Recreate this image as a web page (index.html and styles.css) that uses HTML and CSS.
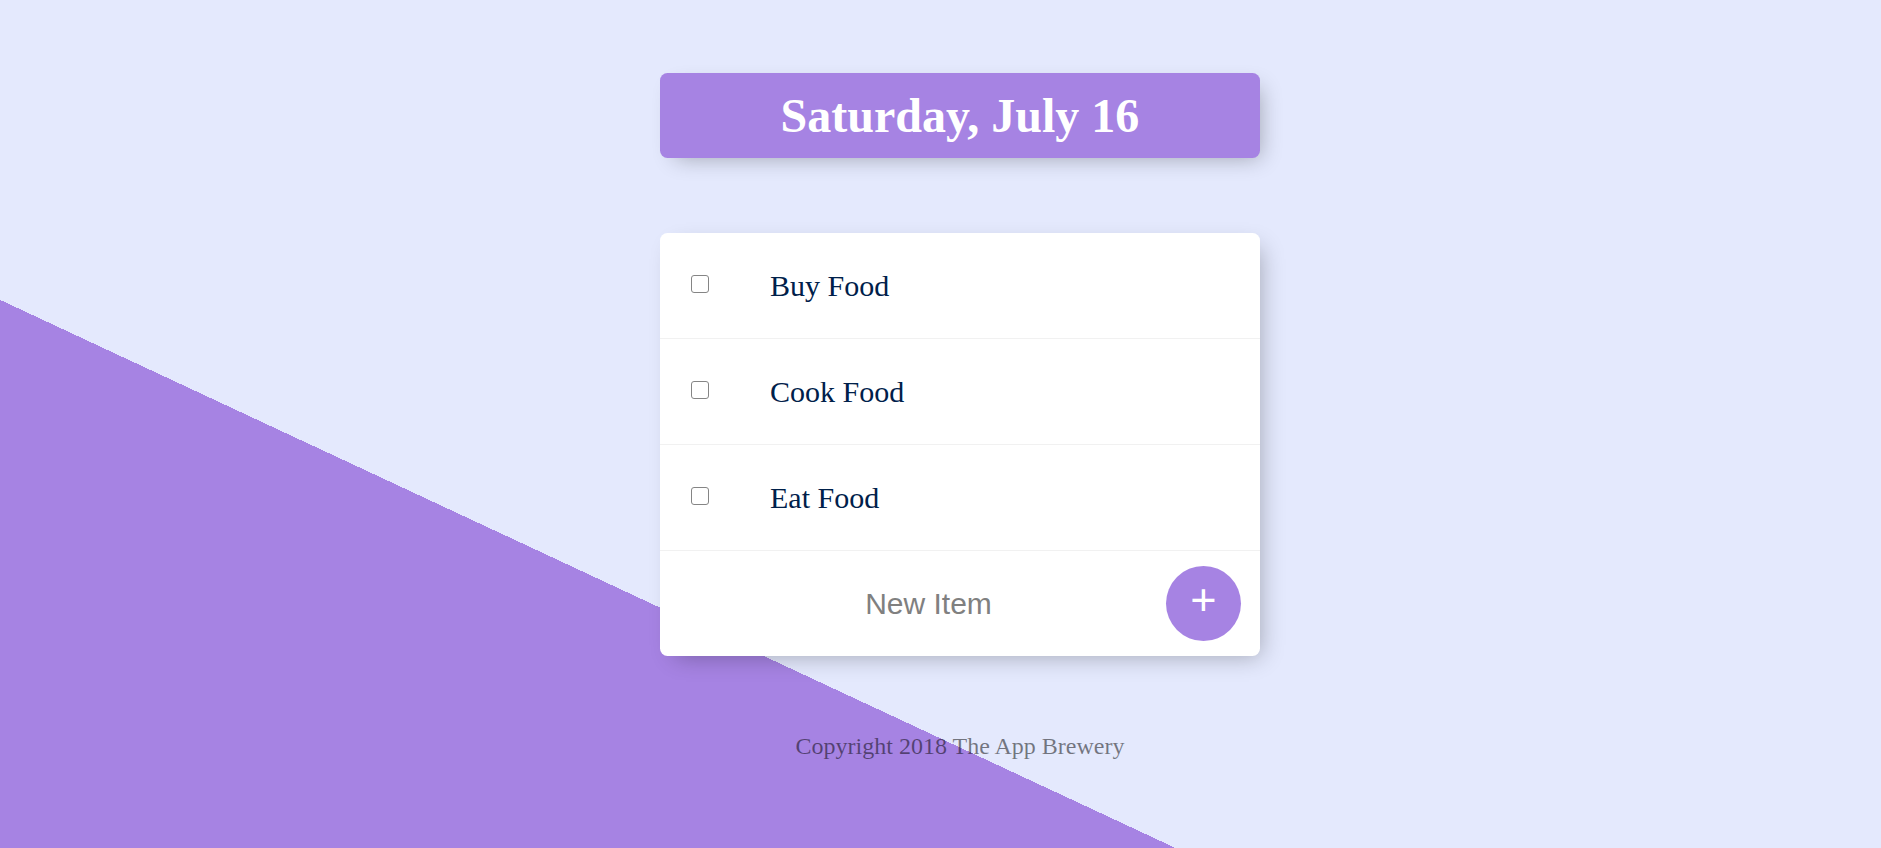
FILE: index.html
```html
<!DOCTYPE html>
<html lang="en">
<head>
<meta charset="utf-8">
<title>To-Do List</title>
<link rel="stylesheet" href="styles.css">
</head>
<body>
  <div class="box heading">
    <h1>Saturday, July 16</h1>
  </div>
  <div class="box list">
    <div class="item">
      <input class="check" type="checkbox">
      <p>Buy Food</p>
    </div>
    <div class="item">
      <input class="check" type="checkbox">
      <p>Cook Food</p>
    </div>
    <div class="item">
      <input class="check" type="checkbox">
      <p>Eat Food</p>
    </div>
    <form class="item new-item" action="#">
      <input class="new-text" type="text" name="newItem" placeholder="New Item" autocomplete="off">
      <button class="add" type="submit" name="list">+</button>
    </form>
  </div>
  <footer class="footer">Copyright 2018 The App Brewery</footer>
</body>
</html>
```

FILE: styles.css
```css
html {
  background-color: #E4E9FD;
  background-image: linear-gradient(25deg, #A683E3 50%, #E4E9FD 50%);
  background-size: 1920px 1495px;
  background-repeat: no-repeat;
}

body {
  margin: 0;
  padding: 73px 0 0 39px;
  font-family: "Liberation Serif", "Times New Roman", serif;
}

.box {
  width: 600px;
  margin: 0 auto;
  background: #fff;
  border-radius: 7.5px;
  box-shadow: 7.5px 7.5px 22.5px -7.5px rgba(0, 0, 0, 0.3);
}

.heading {
  background-color: #A683E3;
  text-align: center;
}

.heading h1 {
  margin: 0;
  padding: 15px;
  font-size: 48px;
  line-height: 55px;
  font-weight: bold;
  color: #fff;
}

.list {
  margin-top: 75px;
  margin-bottom: 77px;
}

.item {
  min-height: 105px;
  display: flex;
  align-items: center;
  border-bottom: 1px solid #F1F1F1;
}

.item:last-child {
  border-bottom: 0;
}

.check {
  appearance: none;
  -webkit-appearance: none;
  box-sizing: border-box;
  width: 18px;
  height: 18px;
  margin: 0 31px 3px 31px;
  border: 1.5px solid #858585;
  border-radius: 3px;
  background: #fff;
  flex: none;
}

.item p {
  margin: 0;
  padding: 30px;
  font-size: 30px;
  font-weight: normal;
  color: #00204a;
}

.new-item {
  margin: 0;
  padding-left: 30px;
  gap: 6px;
}

.new-text {
  width: 470px;
  height: 90px;
  box-sizing: border-box;
  padding: 0 0 0 7px;
  border: none;
  background: transparent;
  font-family: "Liberation Sans", Arial, sans-serif;
  font-size: 30px;
  text-align: center;
  color: #000;
  outline: none;
}

.new-text::placeholder {
  color: grey;
  opacity: 1;
}

.add {
  width: 75px;
  height: 75px;
  border-radius: 50%;
  border: 0;
  background-color: #A683E3;
  color: #fff;
  font-family: "Liberation Sans", Arial, sans-serif;
  font-size: 45px;
  line-height: 1;
  padding: 0 0 9px;
  flex: none;
}

.footer {
  text-align: center;
  color: rgba(0, 0, 0, 0.5);
  font-size: 24px;
}
```
